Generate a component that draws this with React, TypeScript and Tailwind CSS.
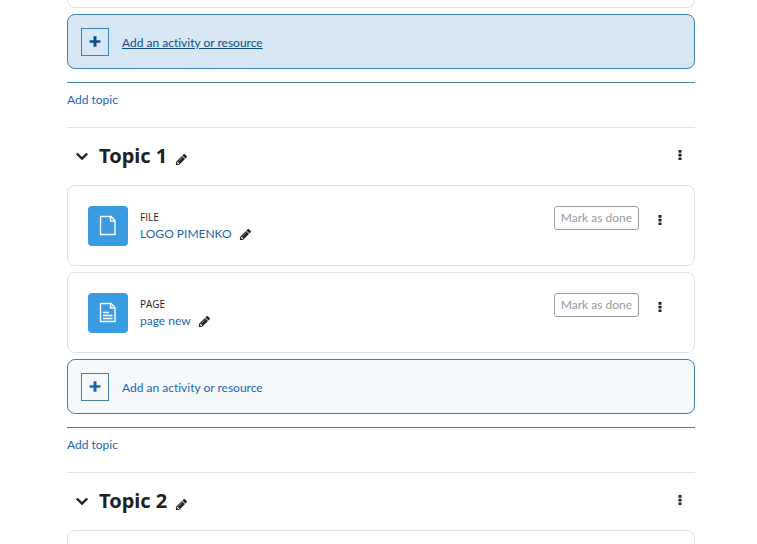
import type { ReactNode } from "react";

type IconProps = { className?: string };

function PencilIcon({ className = "" }: IconProps) {
  return (
    <svg viewBox="0 0 1792 1792" fill="currentColor" className={`size-[13px] ${className}`} aria-hidden="true">
      <path d="M491 1536l91-91-235-235-91 91v107h128v128h107zm523-928q0-22-22-22-10 0-17 7l-542 542q-7 7-7 17 0 22 22 22 10 0 17-7l542-542q7-7 7-17zm-54-192l416 416-832 832h-416v-416zm683 96q0 53-37 90l-166 166-416-416 166-165q36-38 90-38 53 0 91 38l235 234q37 39 37 91z" />
    </svg>
  );
}

function ChevronIcon() {
  return (
    <svg viewBox="0 0 14 14" fill="none" stroke="currentColor" strokeWidth="2.4" className="size-[14px]" aria-hidden="true">
      <path d="M1.8 4.5l5.2 5 5.2-5" />
    </svg>
  );
}

function PlusIcon() {
  return (
    <svg viewBox="0 0 14 14" fill="currentColor" className="size-[14px]" aria-hidden="true">
      <path d="M5.5 1.2h3v4h3.9v2.6h-3.9v4h-3v-4h-3.9v-2.6h3.9z" />
    </svg>
  );
}

function FileIcon({ lines = false }: { lines?: boolean }) {
  return (
    <svg viewBox="0 0 24 24" fill="none" stroke="white" strokeWidth="1.4" className="size-6" aria-hidden="true">
      <path d="M4.5 2.5h10.5l4 4v14h-14.5zM14.5 2.5v4.5h4.5" />
      {lines && <path d="M7 11.5h6M7 14.5h9.5M7 17.5h9.5" />}
    </svg>
  );
}

function KebabButton({ label }: { label: string }) {
  return (
    <button type="button" aria-label={label} className="flex h-6 w-5 items-center justify-center text-[#1d2125]">
      <svg viewBox="0 0 4 12" fill="currentColor" className="h-3 w-1" aria-hidden="true">
        <rect x="0.5" y="1" width="3" height="2.7" rx="0.5" />
        <rect x="0.5" y="4.7" width="3" height="2.7" rx="0.5" />
        <rect x="0.5" y="8.4" width="3" height="2.7" rx="0.5" />
      </svg>
    </button>
  );
}

function AddActivity({ active = false }: { active?: boolean }) {
  return (
    <button
      type="button"
      className={`flex h-[55px] w-full items-center gap-[13px] rounded-lg border border-[#3f80b5] px-[13px] text-left ${
        active ? "bg-[#d8e7f4] text-[#104d88] underline" : "bg-[#f5f9fc] text-[#1b66b3]"
      }`}
    >
      <span className="flex size-7 items-center justify-center border border-[#3f80b5]">
        <PlusIcon />
      </span>
      <span className="pt-0.5">Add an activity or resource</span>
    </button>
  );
}

function AddTopic() {
  return (
    <div className="mt-[13px] border-t border-[#3f80b5] pt-[7px] pb-[17px]">
      <a href="#add-topic" className="block w-fit leading-5 text-[#1b66b3]">
        Add topic
      </a>
    </div>
  );
}

function Topic({ title, children }: { title: string; children: ReactNode }) {
  return (
    <section className="border-t border-[#dee2e6]">
      <header className="flex h-[57px] items-center pr-[5px] pb-0.5 pl-2">
        <button type="button" aria-label={`Collapse ${title}`}>
          <ChevronIcon />
        </button>
        <h3 className="ml-2.5 font-['Noto_Sans',sans-serif] text-[20px] leading-7 font-bold">{title}</h3>
        <button type="button" aria-label={`Edit ${title}`} className="mt-2 ml-2">
          <PencilIcon />
        </button>
        <div className="ml-auto pb-0.5">
          <KebabButton label={`${title} actions`} />
        </div>
      </header>
      <div className="flex flex-col gap-1.5">{children}</div>
    </section>
  );
}

function Activity({ kind, name, lines = false }: { kind: string; name: string; lines?: boolean }) {
  return (
    <article className="flex items-start rounded-lg border border-[#dee2e6] px-5 pt-5 pb-[19px]">
      <div className="flex size-10 items-center justify-center rounded-[4px] bg-[#399be2]">
        <FileIcon lines={lines} />
      </div>
      <div className="ml-3 pt-[3px]">
        <div className="font-['Open_Sans',sans-serif] text-[10px] leading-4 uppercase">{kind}</div>
        <div className="flex items-center gap-[7px] pt-px">
          <a href="#activity" className="leading-4 text-[#1b66b3]">
            {name}
          </a>
          <button type="button" aria-label={`Edit ${name}`}>
            <PencilIcon />
          </button>
        </div>
      </div>
      <div className="ml-auto flex items-start gap-[11px] pr-1">
        <button
          type="button"
          className="h-6 rounded-[3px] border border-[#9b9ea1] px-1.5 leading-5 text-[#96999c]"
        >
          Mark as done
        </button>
        <div className="pt-0.5">
          <KebabButton label={`${name} actions`} />
        </div>
      </div>
    </article>
  );
}

export default function App() {
  return (
    <main className="h-screen overflow-hidden bg-white pr-[62px] pl-[67px] font-['Lato',sans-serif] text-[12px] text-[#1d2125] [font-variant-ligatures:none]">
      <div className="mb-1.5 h-2 rounded-b-lg border border-t-0 border-[#dee2e6]" />
      <AddActivity active />
      <AddTopic />
      <Topic title="Topic 1">
        <Activity kind="File" name="LOGO PIMENKO" />
        <Activity kind="Page" name="page new" lines />
        <AddActivity />
      </Topic>
      <AddTopic />
      <Topic title="Topic 2">
        <div className="h-20 rounded-lg border border-[#dee2e6]" />
      </Topic>
    </main>
  );
}
